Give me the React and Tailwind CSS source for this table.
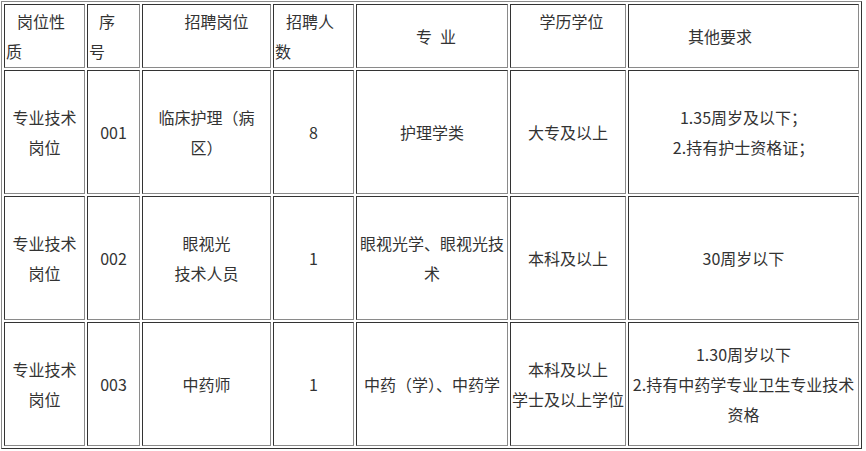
import React from 'react';

const cell =
  'border border-t-[#333] border-l-[#333] border-r-[#8a8a8a] border-b-[#8a8a8a] p-px text-center align-middle';

const rows = [
  {
    id: '001',
    kind: ['专业技术', '岗位'],
    post: ['临床护理（病', '区）'],
    count: '8',
    major: ['护理学类'],
    degree: ['大专及以上'],
    other: ['1.35周岁及以下；', '2.持有护士资格证；'],
  },
  {
    id: '002',
    kind: ['专业技术', '岗位'],
    post: ['眼视光', '技术人员'],
    count: '1',
    major: ['眼视光学、眼视光技', '术'],
    degree: ['本科及以上'],
    other: ['30周岁以下'],
  },
  {
    id: '003',
    kind: ['专业技术', '岗位'],
    post: ['中药师'],
    count: '1',
    major: ['中药（学）、中药学'],
    degree: ['本科及以上', '学士及以上学位'],
    other: ['1.30周岁以下', '2.持有中药学专业卫生专业技术', '资格'],
  },
];

// lines of text, one per entry
const Lines = ({ items }) => (
  <>
    {items.map((t, i) => (
      <div key={i}>{t}</div>
    ))}
  </>
);

export default function App() {
  return (
    <div className="bg-white pl-px pt-px font-['Noto_Sans_CJK_SC',sans-serif] text-[16px] leading-[30px] text-[#333]">
      <table className="w-[861px] table-fixed border-separate border-spacing-[2px] border border-t-[#8a8a8a] border-l-[#8a8a8a] border-r-[#333] border-b-[#333]">
        <thead>
          <tr>
            <th className={`${cell} h-[64px] w-[81px] text-left font-normal`}>
              <div className="pl-[11px]">岗位性</div>
              <div>质</div>
            </th>
            <th className={`${cell} w-[53px] text-left font-normal`}>
              <div className="pl-[10px]">序</div>
              <div>号</div>
            </th>
            <th className={`${cell} w-[129px] font-normal`}>
              <div className="pl-[20px]">招聘岗位</div>
              <div>&nbsp;</div>
            </th>
            <th className={`${cell} w-[81px] text-left font-normal`}>
              <div className="pl-[11px]">招聘人</div>
              <div>数</div>
            </th>
            <th className={`${cell} w-[152px] font-normal`}>
              <div className="pl-[8px]">专&ensp;业</div>
            </th>
            <th className={`${cell} w-[116px] font-normal`}>
              <div className="pl-[7px]">学历学位</div>
              <div>&nbsp;</div>
            </th>
            <th className={`${cell} w-[231px] text-left font-normal`}>
              <div className="pl-[58px]">其他要求</div>
            </th>
          </tr>
        </thead>
        <tbody>
          {rows.map((r) => (
            <tr key={r.id}>
              <td className={`${cell} h-[124px]`}>
                <Lines items={r.kind} />
              </td>
              <td className={cell}>{r.id}</td>
              <td className={cell}>
                <Lines items={r.post} />
              </td>
              <td className={cell}>{r.count}</td>
              <td className={cell}>
                <Lines items={r.major} />
              </td>
              <td className={cell}>
                <Lines items={r.degree} />
              </td>
              <td className={cell}>
                <Lines items={r.other} />
              </td>
            </tr>
          ))}
        </tbody>
      </table>
    </div>
  );
}
